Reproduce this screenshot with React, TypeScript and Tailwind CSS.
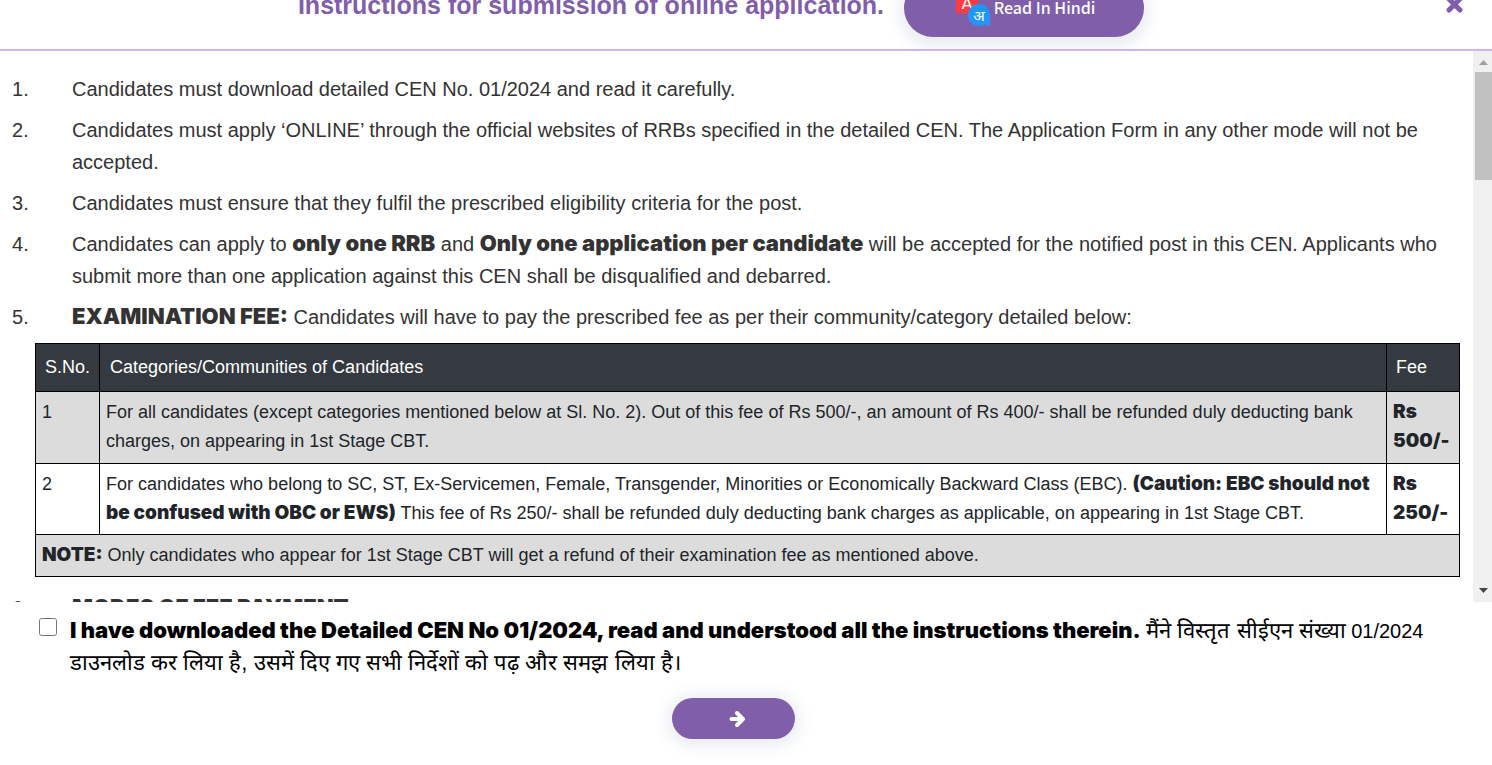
import type { ReactNode } from 'react';

function Strong({ children, className = 'text-[22px]' }: { children: ReactNode; className?: string }) {
  return <strong className={`font-['Inter',sans-serif] font-black leading-none ${className}`}>{children}</strong>;
}

const instructions: ReactNode[] = [
  'Candidates must download detailed CEN No. 01/2024 and read it carefully.',
  'Candidates must apply ‘ONLINE’ through the official websites of RRBs specified in the detailed CEN. The Application Form in any other mode will not be accepted.',
  'Candidates must ensure that they fulfil the prescribed eligibility criteria for the post.',
  <>
    Candidates can apply to <Strong>only one RRB</Strong> and <Strong>Only one application per candidate</Strong> will be
    accepted for the notified post in this CEN. Applicants who submit more than one application against this CEN shall be
    disqualified and debarred.
  </>,
  <>
    <Strong>EXAMINATION FEE:</Strong> Candidates will have to pay the prescribed fee as per their community/category
    detailed below:
  </>,
];

function Item({ number, children }: { number: number; children: ReactNode }) {
  return (
    <li className="flex">
      <span className="w-[60px] shrink-0">{number}.</span>
      <div className="min-w-0 flex-1">{children}</div>
    </li>
  );
}

function TranslateIcon() {
  return (
    <svg width="37" height="37" viewBox="-2 -3 37 37" aria-hidden="true" className="shrink-0">
      <circle cx="12" cy="11" r="11" fill="#ff3b3f" />
      <path d="M1 12v10l7-2z" fill="#ff3b3f" />
      <text x="12" y="17" textAnchor="middle" fill="#fff" fontSize="17" fontWeight="400" fontFamily="Roboto, sans-serif">A</text>
      <circle cx="24" cy="23" r="11" fill="#2196f8" />
      <path d="M35 24v10l-8-2z" fill="#2196f8" />
      <text x="24" y="29" textAnchor="middle" fill="#fff" fontSize="15" fontWeight="400" fontFamily="Noto Sans, sans-serif">अ</text>
    </svg>
  );
}

function FeeTable() {
  const cell = 'border border-black px-[6px] py-[6px] align-top';
  return (
    <table className="w-full border-collapse text-left text-[18px] leading-[29px] text-[#212529]">
      <thead className="bg-[#343a40] text-white">
        <tr className="h-12">
          <th scope="col" className="w-16 border border-black px-[9px] font-normal">S.No.</th>
          <th scope="col" className="border border-black px-[10px] font-normal">Categories/Communities of Candidates</th>
          <th scope="col" className="w-[73px] border border-black px-[9px] font-normal">Fee</th>
        </tr>
      </thead>
      <tbody>
        <tr className="h-[72px] bg-[#dcdcdc]">
          <td className={cell}>1</td>
          <td className={cell}>
            For all candidates (except categories mentioned below at Sl. No. 2). Out of this fee of Rs 500/-, an amount of
            Rs 400/- shall be refunded duly deducting bank charges, on appearing in 1st Stage CBT.
          </td>
          <td className={cell}><Strong className="text-[19px]">Rs 500/-</Strong></td>
        </tr>
        <tr className="bg-white">
          <td className={cell}>2</td>
          <td className={cell}>
            For candidates who belong to SC, ST, Ex-Servicemen, Female, Transgender, Minorities or Economically Backward
            Class (EBC). <Strong className="text-[19px]">(Caution: EBC should not be confused with OBC or EWS)</Strong> This fee of Rs
            250/- shall be refunded duly deducting bank charges as applicable, on appearing in 1st Stage CBT.
          </td>
          <td className={cell}><Strong className="text-[19px]">Rs 250/-</Strong></td>
        </tr>
        <tr className="bg-[#dcdcdc]">
          <td colSpan={3} className={cell}>
            <Strong className="text-[19px]">NOTE:</Strong> Only candidates who appear for 1st Stage CBT will get a refund of their
            examination fee as mentioned above.
          </td>
        </tr>
      </tbody>
    </table>
  );
}

export default function App() {
  return (
    <main className="flex h-screen flex-col overflow-hidden bg-white font-['Liberation_Sans',Arial,sans-serif] text-[20px] leading-8 text-[#333]">
      <header className="z-10 flex h-[51px] shrink-0 items-end overflow-hidden border-b-2 border-[#cdb5ee] pr-[29px] pb-3">
        <div className="flex flex-1 items-center justify-center gap-5 pr-1">
          <h1 className="pb-[6px] text-[25px] font-bold text-[#805eaa]">Instructions for submission of online application.</h1>
          <button
            type="button"
            className="flex h-[58px] w-60 items-center justify-center gap-1 rounded-full bg-[#805eaa] pb-[2px] font-['Noto_Sans_CJK_SC',sans-serif] text-[16px] font-medium text-white shadow-[0_4px_16px_4px_rgba(60,80,130,0.12)]"
          >
            <TranslateIcon />
            Read In Hindi
          </button>
        </div>
        <button type="button" aria-label="Close" className="pb-6 text-[#805eaa]">
          <svg width="17" height="17" viewBox="0 0 17 17" fill="none" stroke="currentColor" strokeWidth="5" strokeLinecap="round" aria-hidden="true">
            <path d="M3 3l11 11M14 3L3 14" />
          </svg>
        </button>
      </header>

      <section className="flex min-h-0 flex-1">
        <div className="min-w-0 flex-1 overflow-y-auto pr-[13px] [scrollbar-width:none]">
          <ol className="flex flex-col gap-[9px] pt-[22px] pr-5 pl-3">
            {instructions.map((text, i) => (
              <Item key={i} number={i + 1}>{text}</Item>
            ))}
          </ol>
          <div className="pt-[10px] pb-[15px] pl-[35px]">
            <FeeTable />
          </div>
          <ol start={6} className="pr-5 pl-3">
            <Item number={6}><Strong>MODES OF FEE PAYMENT</Strong></Item>
          </ol>
        </div>
        <div aria-hidden="true" className="flex w-[19px] shrink-0 flex-col items-end bg-[#f0f0f0]">
          <svg width="17" height="21" viewBox="0 0 17 21"><path d="M4 14l4.500-5 4.500 5z" fill="#a0a0a0" /></svg>
          <div className="h-[108px] w-[17px] bg-[#c1c1c1]" />
          <svg width="17" height="21" viewBox="0 0 17 21" className="mt-auto"><path d="M4 7l4.500 5 4.500-5z" fill="#444" /></svg>
        </div>
      </section>

      <footer className="shrink-0 pt-[13px] pb-[26px] text-black">
        <div className="flex gap-[13px] pr-5 pl-[39px]">
          <input id="agree" type="checkbox" className="mt-[3px] size-[18px] shrink-0" />
          <label htmlFor="agree" className="min-w-0 flex-1">
            <Strong>I have downloaded the Detailed CEN No 01/2024, read and understood all the instructions therein.</Strong>{' '}
            <span lang="hi" className="text-[22px] leading-none">मैंने विस्तृत सीईएन संख्या</span> 01/2024{' '}
            <span lang="hi" className="text-[22px] leading-none">डाउनलोड कर लिया है, उसमें दिए गए सभी निर्देशों को पढ़ और समझ लिया है।</span>
          </label>
        </div>
        <div className="flex justify-center pt-[19px] pr-[25px]">
          <button
            type="button"
            aria-label="Continue"
            className="flex h-[41px] w-[123px] items-center justify-center rounded-full bg-[#805eaa] pl-[7px] text-white shadow-[0_2px_16px_4px_rgba(60,80,130,0.12)]"
          >
            <svg width="17" height="18" viewBox="0 0 17 18" fill="none" stroke="currentColor" strokeWidth="4" strokeLinecap="round" strokeLinejoin="round" aria-hidden="true">
              <path d="M2.500 9H13M8 3l6 6-6 6" />
            </svg>
          </button>
        </div>
      </footer>
    </main>
  );
}
